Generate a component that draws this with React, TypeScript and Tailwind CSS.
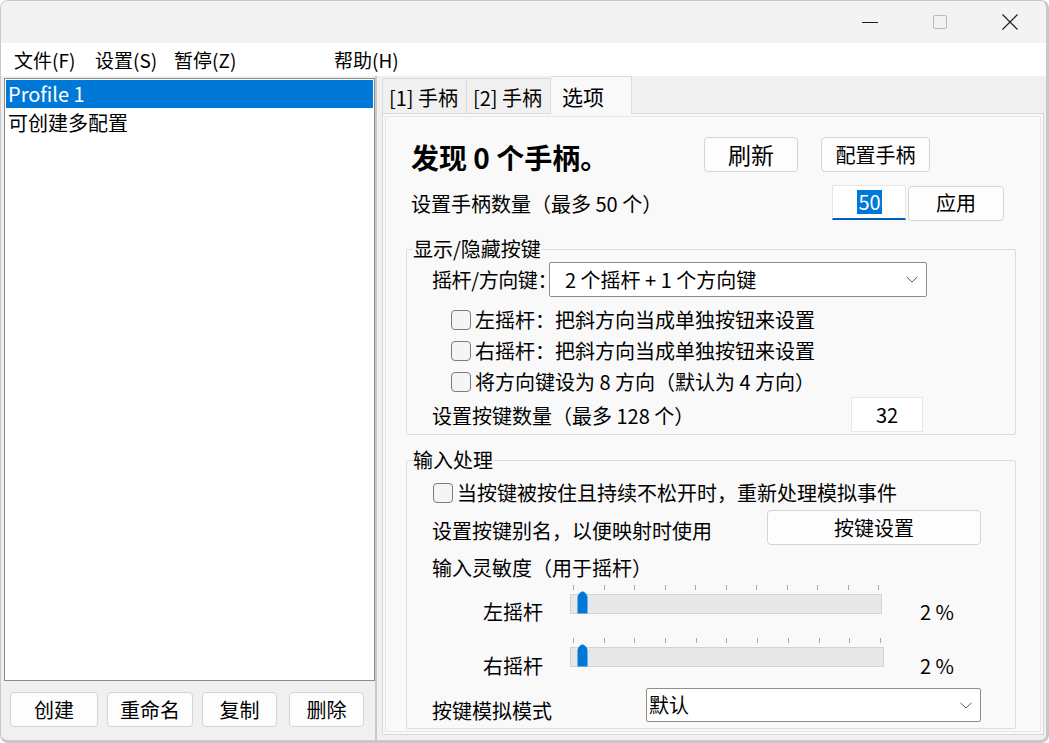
import React from "react";

function Btn({ className = "", children }: { className?: string; children: React.ReactNode }) {
  return (
    <div
      className={`flex items-center justify-center bg-[#fdfdfd] border border-[#d4d4d4] rounded-[4px] shrink-0 leading-none whitespace-nowrap ${className}`}
    >
      {children}
    </div>
  );
}

function Check() {
  return <div className="w-[20px] h-[20px] rounded-[4px] border border-[#7c7c7c] bg-[#f5f5f5] shrink-0" />;
}

function Chevron() {
  return (
    <svg width="12" height="7" viewBox="0 0 12 7" className="shrink-0">
      <path d="M0.5 0.8 L6 6 L11.5 0.8" fill="none" stroke="#5c5c5c" strokeWidth="1" />
    </svg>
  );
}

function Select({ className = "", text }: { className?: string; text: string }) {
  return (
    <div
      className={`flex items-center justify-between bg-white border border-[#8d8d8d] rounded-[2px] shrink-0 ${className}`}
    >
      <span className="leading-[26px] whitespace-nowrap">{text}</span>
      <Chevron />
    </div>
  );
}

function Slider({ trackClass }: { trackClass: string }) {
  const ticks = Array.from({ length: 11 });
  return (
    <div className="flex flex-col shrink-0">
      <div className={`h-[5px] mt-[4px] flex justify-between px-[3px] ${trackClass}`}>
        {ticks.map((_, i) => (
          <div key={i} className="w-px h-[5px] bg-[#a8a8a8]" />
        ))}
      </div>
      <div className={`relative h-[20px] mt-[4px] bg-[#e7e8e9] border border-[#d3d3d3] ${trackClass}`}>
        <svg width="11" height="23" viewBox="0 0 11 23" className="absolute left-[6px] top-[-4px]">
          <path d="M0.5 7 C0.5 3.5 3 1.2 5.5 0.3 C8 1.2 10.5 3.5 10.5 7 V22.5 H0.5 Z" fill="#0078d7" />
        </svg>
      </div>
    </div>
  );
}

export default function App() {
  return (
    <div className="w-[1049px] h-[743px] bg-white font-['Noto_Sans_CJK_SC',sans-serif] text-black text-[20px] overflow-hidden">
      <div className="w-full h-full flex flex-col rounded-[8px] border-l border-t border-r-[3px] border-b-[3px] border-[#c8c8c8] overflow-hidden bg-[#f0f0f0]">
        {/* Title bar */}
        <div className="h-[42px] bg-[#f3f3f3] flex justify-end shrink-0">
          <div className="w-[70px] h-full flex items-center justify-center">
            <div className="w-[16px] h-px bg-[#1c1c1c]" />
          </div>
          <div className="w-[70px] h-full flex items-center justify-center">
            <div className="w-[14px] h-[14px] border border-[#b9b9b9] rounded-[2px]" />
          </div>
          <div className="w-[70px] h-full flex items-center justify-center mr-[1px]">
            <svg width="16" height="16" viewBox="0 0 16 16">
              <path d="M0.5 0.5 L15.5 15.5 M15.5 0.5 L0.5 15.5" stroke="#1c1c1c" strokeWidth="1.1" />
            </svg>
          </div>
        </div>

        {/* Menu bar */}
        <div className="h-[33px] bg-white flex items-center pl-[13px] shrink-0 text-[19px]">
          <span className="w-[81px] leading-[26px]">文件(F)</span>
          <span className="w-[79px] leading-[26px]">设置(S)</span>
          <span className="w-[160px] leading-[26px]">暂停(Z)</span>
          <span className="leading-[26px]">帮助(H)</span>
        </div>

        {/* Body */}
        <div className="flex-1 flex min-h-0">
          {/* Left panel */}
          <div className="w-[374px] pl-[3px] pt-[2px] flex flex-col shrink-0">
            <div className="w-[371px] h-[603px] border border-[#8a8a8a] bg-white p-[1px]">
              <div className="h-[28px] bg-[#0078d7] text-white pl-[2px] flex items-center">
                <span className="leading-[26px]">Profile 1</span>
              </div>
              <div className="h-[30px] pl-[2px] flex items-center">
                <span className="leading-[26px]">可创建多配置</span>
              </div>
            </div>
            <div className="flex mt-[11px] ml-[6px]">
              <Btn className="w-[88px] h-[35px]">创建</Btn>
              <Btn className="w-[86px] h-[35px] ml-[9px]">重命名</Btn>
              <Btn className="w-[75px] h-[35px] ml-[9px]">复制</Btn>
              <Btn className="w-[75px] h-[35px] ml-[12px]">删除</Btn>
            </div>
          </div>

          {/* Splitter */}
          <div className="w-[7px] flex shrink-0">
            <div className="w-[2px] h-full bg-[#c9c9c9]" />
          </div>

          {/* Right pane */}
          <div className="w-[662px] flex flex-col shrink-0">
            <div className="h-[37px] flex items-end shrink-0">
              <div className="w-[85px] h-[35px] border border-b-0 border-[#dcdcdc] bg-[#f0f0f0] pl-[6px] flex items-center pt-[3px]">
                <span className="leading-[26px] whitespace-nowrap">[1] 手柄</span>
              </div>
              <div className="w-[84px] h-[35px] border border-b-0 border-l-0 border-[#dcdcdc] bg-[#f0f0f0] pl-[6px] flex items-center pt-[3px]">
                <span className="leading-[26px] whitespace-nowrap">[2] 手柄</span>
              </div>
              <div className="relative z-10 w-[81px] h-[38px] -mb-px border border-b-0 border-l-0 border-[#dcdcdc] bg-[#f9f9f9] pl-[11px] flex items-center">
                <span className="leading-[26px] text-[21px]">选项</span>
              </div>
            </div>

            <div className="h-[622px] border border-[#d9d9d9] bg-[#f9f9f9] p-[2px] shrink-0">
              <div className="h-full border border-[#e6e6e6] pl-[20px] pt-[20px] flex flex-col">
                {/* Row 1 */}
                <div className="h-[35px] flex items-center pl-[5px]">
                  <span className="w-[293px] text-[28px] font-bold leading-[35px] mt-[5px] whitespace-nowrap">发现 0 个手柄。</span>
                  <Btn className="w-[94px] h-[35px] text-[23px]">刷新</Btn>
                  <Btn className="w-[109px] h-[35px] ml-[23px]">配置手柄</Btn>
                </div>
                {/* Row 2 */}
                <div className="h-[36px] mt-[12px] flex items-center pl-[5px]">
                  <span className="w-[421px] leading-[26px] mt-[3px] whitespace-nowrap">设置手柄数量（最多 50 个）</span>
                  <div className="w-[74px] h-[35px] bg-white border border-[#e6e6e6] border-b-2 border-b-[#005fb8] flex items-center justify-center shrink-0">
                    <span className="bg-[#0078d7] text-white leading-[24px] px-[1px] ml-[1px]">50</span>
                  </div>
                  <Btn className="w-[96px] h-[35px] ml-[2px] mt-[2px]">应用</Btn>
                </div>

                {/* Group 1 */}
                <fieldset className="w-[610px] mt-[17px] border border-[#dcdcdc] p-0 rounded-[2px]">
                  <legend className="ml-[6px] px-0 leading-[24px]">显示/隐藏按键</legend>
                  <div className="pl-[25px] pb-[2px] flex flex-col">
                    <div className="h-[35px] mt-px flex items-center">
                      <span className="w-[117px] leading-[26px] whitespace-nowrap shrink-0 tracking-[-0.4px]">摇杆/方向键：</span>
                      <Select className="w-[378px] h-[35px] pl-[15px] pr-[8px]" text="2 个摇杆 + 1 个方向键" />
                    </div>
                    <div className="mt-[7px] flex flex-col pl-[19px]">
                      <div className="h-[31px] flex items-center gap-[4px]">
                        <Check />
                        <span className="leading-[26px] whitespace-nowrap">左摇杆：把斜方向当成单独按钮来设置</span>
                      </div>
                      <div className="h-[31px] flex items-center gap-[4px]">
                        <Check />
                        <span className="leading-[26px] whitespace-nowrap">右摇杆：把斜方向当成单独按钮来设置</span>
                      </div>
                      <div className="h-[31px] flex items-center gap-[4px]">
                        <Check />
                        <span className="leading-[26px] whitespace-nowrap">将方向键设为 8 方向（默认为 4 方向）</span>
                      </div>
                    </div>
                    <div className="h-[35px] flex items-center">
                      <span className="w-[419px] leading-[26px] mt-[2px] whitespace-nowrap shrink-0">设置按键数量（最多 128 个）</span>
                      <div className="w-[72px] h-[35px] bg-white border border-[#e8e8e8] flex items-center justify-center shrink-0">
                        <span className="leading-[24px]">32</span>
                      </div>
                    </div>
                  </div>
                </fieldset>

                {/* Group 2 */}
                <fieldset className="w-[610px] mt-[13px] border border-[#dcdcdc] p-0 rounded-[2px]">
                  <legend className="ml-[6px] px-0 leading-[24px]">输入处理</legend>
                  <div className="pl-[26px] pb-[6px] flex flex-col">
                    <div className="h-[31px] mt-[5px] flex items-center gap-[4px]">
                      <Check />
                      <span className="leading-[26px] whitespace-nowrap">当按键被按住且持续不松开时，重新处理模拟事件</span>
                    </div>
                    <div className="h-[35px] mt-[2px] flex items-center">
                      <span className="w-[334px] leading-[26px] mt-[6px] whitespace-nowrap shrink-0 -ml-px">设置按键别名，以便映射时使用</span>
                      <Btn className="w-[214px] h-[35px] ml-px">按键设置</Btn>
                    </div>
                    <div className="h-[26px] mt-[10px] flex items-center -ml-px">
                      <span className="leading-[26px] whitespace-nowrap">输入灵敏度（用于摇杆）</span>
                    </div>
                    <div className="h-[33px] flex items-start">
                      <span className="w-[137px] pl-[50px] mt-[19px] leading-[24px] shrink-0">左摇杆</span>
                      <Slider trackClass="w-[312px]" />
                      <span className="ml-[38px] mt-[19px] leading-[24px] whitespace-nowrap">2 %</span>
                    </div>
                    <div className="h-[33px] mt-[20px] flex items-start">
                      <span className="w-[137px] pl-[50px] mt-[20px] leading-[24px] shrink-0">右摇杆</span>
                      <Slider trackClass="w-[314px]" />
                      <span className="ml-[36px] mt-[20px] leading-[24px] whitespace-nowrap">2 %</span>
                    </div>
                    <div className="h-[34px] mt-[21px] flex items-start">
                      <span className="w-[213px] mt-[11px] leading-[24px] shrink-0 whitespace-nowrap -ml-px">按键模拟模式</span>
                      <Select className="w-[335px] h-[34px] pl-[2px] pr-[8px] ml-px" text="默认" />
                    </div>
                  </div>
                </fieldset>
              </div>
            </div>
          </div>
        </div>
      </div>
    </div>
  );
}
